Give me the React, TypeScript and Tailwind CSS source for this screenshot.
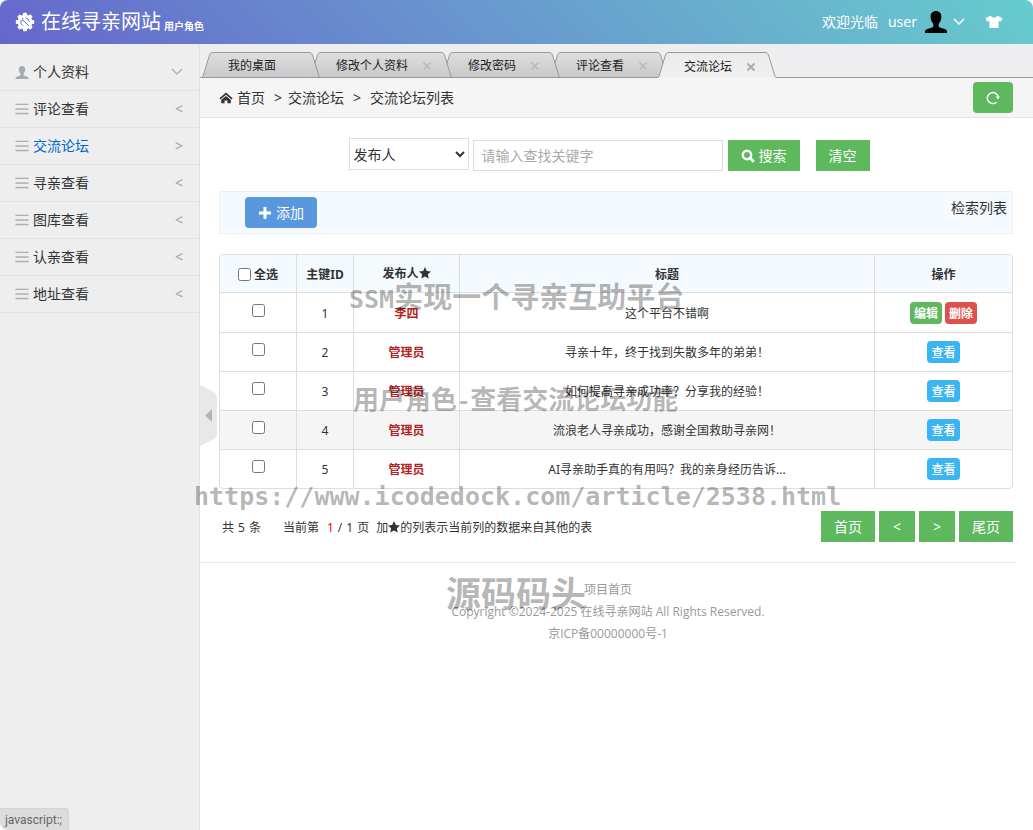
import { useState } from 'react';

type Tab = { title: string; closable: boolean };
type Topic = { id: number; author: string; title: string; own?: boolean };

const menus = ['评论查看', '交流论坛', '寻亲查看', '图库查看', '认亲查看', '地址查看'];

const tabs: Tab[] = [
  { title: '我的桌面', closable: false },
  { title: '修改个人资料', closable: true },
  { title: '修改密码', closable: true },
  { title: '评论查看', closable: true },
  { title: '交流论坛', closable: true },
];

const topics: Topic[] = [
  { id: 1, author: '李四', title: '这个平台不错啊', own: true },
  { id: 2, author: '管理员', title: '寻亲十年，终于找到失散多年的弟弟！' },
  { id: 3, author: '管理员', title: '如何提高寻亲成功率？分享我的经验！' },
  { id: 4, author: '管理员', title: '流浪老人寻亲成功，感谢全国救助寻亲网！' },
  { id: 5, author: '管理员', title: 'AI寻亲助手真的有用吗？我的亲身经历告诉...' },
];

const zIndexes = ['z-[5]', 'z-[4]', 'z-[3]', 'z-[2]', 'z-[1]'];

const GearIcon = () => (
  <svg width="20" height="20" viewBox="0 0 20 20" className="shrink-0">
    <g fill="#fff">
      <circle cx="10" cy="10" r="7.4" />
      {[0, 45, 90, 135, 180, 225, 270, 315].map((a) => (
        <rect key={a} x="8" y="0.8" width="4" height="4" rx="1" transform={`rotate(${a} 10 10)`} />
      ))}
    </g>
    <path
      d="M6 8.200A4.400 4.400 0 0 0 7.400 13.400M7.800 6.400v2.200l2 1.200 4 4M11 5.800A4.400 4.400 0 0 1 14.200 9.400"
      fill="none"
      stroke="#6a6fcb"
      strokeWidth="1"
      strokeLinecap="round"
    />
  </svg>
);

const PersonIcon = ({ className }: { className: string }) => (
  <svg viewBox="0 0 22 22" className={className} fill="currentColor">
    <path d="M11 0C7.7 0 5.6 2.2 5.6 5.6c0 2.6.9 5.4 2.7 7.1v2.4c0 .8-.4 1.2-1.2 1.5l-4.8 1.5C.8 18.600 0 19.500 0 21v.4c0 .4.3.6.7.6h20.600c.4 0 .7-.2.7-.6V21c0-1.500-.8-2.400-2.300-2.900l-4.800-1.500c-.8-.3-1.200-.7-1.200-1.500v-2.400c1.800-1.700 2.700-4.500 2.700-7.100C16.400 2.200 14.300 0 11 0z" />
  </svg>
);

const ChevronDown = ({ className }: { className: string }) => (
  <svg viewBox="0 0 12 8" className={className} fill="none" stroke="currentColor" strokeWidth="1.5">
    <path d="M1 1l5 5 5-5" />
  </svg>
);

const ShirtIcon = () => (
  <svg width="18" height="14" viewBox="0 0 18 14" fill="#fff">
    <path d="M5.600.8C6.400 2 7.600 2.600 9 2.600S11.600 2 12.400.8L17.400 3 16.200 6.600 13.600 6v7H4.400V6l-2.600.6L.6 3z" />
  </svg>
);

const ListIcon = () => (
  <svg width="14" height="12" viewBox="0 0 14 12" className="shrink-0" fill="#a9b0b6">
    <rect x="0.5" y="0.7" width="13" height="1.300" />
    <rect x="0.5" y="5.300" width="13" height="1.500" />
    <rect x="0.5" y="9.800" width="13" height="1.500" />
  </svg>
);

const HomeIcon = () => (
  <svg width="14" height="12" viewBox="0 0 14 12" fill="#333">
    <path d="M7 .4 13.600 6.200l-1.100 1.200L7 2.800 1.500 7.400.4 6.200z" />
    <path d="M7 4 11.800 8v3.200H8.400V8.400H5.600v2.800H2.200V8z" />
  </svg>
);

const StarIcon = () => (
  <svg width="12" height="12" viewBox="0 0 12 12" className="inline-block align-[-1px]" fill="currentColor">
    <path d="M6 0l1.800 3.900 4.200.5-3.100 2.900.8 4.300L6 9.500l-3.700 2.100.8-4.300L0 4.400l4.200-.5z" />
  </svg>
);

// sloped tab: left edge + body + right edge, neighbours overlap by one edge
const TabItem = ({ tab, active, z, onClick }: { tab: Tab; active: boolean; z: string; onClick: () => void }) => {
  const gradient = active ? 'from-[#eaebeb] to-[#f0f0f0]' : 'from-[#dddedd] to-[#c9c9cb]';
  const id = active ? 'tabOn' : 'tabOff';
  return (
    <li className={`relative flex h-[26px] -mr-3 ${active ? 'z-10' : z}`}>
      <svg width="12" height="26" viewBox="0 0 12 26" className="shrink-0">
        <defs>
          <linearGradient id={id} x1="0" y1="0" x2="0" y2="1">
            <stop offset="0" stopColor={active ? '#eaebeb' : '#dddedd'} />
            <stop offset="1" stopColor={active ? '#f0f0f0' : '#c9c9cb'} />
          </linearGradient>
        </defs>
        <path d="M0 26C1.500 25.500 2 24.500 2.400 23L8.500 3C9.200 1.200 10.200.5 12 .5V26z" fill={`url(#${id})`} />
        <path d="M0 25.500C1.500 25.500 2 24.500 2.400 23L8.500 3C9.200 1.200 10.200.5 12 .5" fill="none" stroke="#999" />
        {!active && <path d="M0 25.500H12" stroke="#999" />}
      </svg>
      <div className={`flex items-center border-t border-[#999] bg-gradient-to-b pt-0.5 pl-[15px] pr-[9px] ${gradient} ${active ? '' : 'border-b'}`}>
        <button type="button" onClick={onClick} className="text-xs whitespace-nowrap text-[#222]">
          {tab.title}
        </button>
        {tab.closable ? (
          <button type="button" aria-label="关闭" className="ml-[14px] w-[10px]">
            <svg width="10" height="10" viewBox="0 0 10 10" stroke={active ? '#a9adb1' : '#b4b8bc'} strokeWidth={active ? 2 : 1.500}>
              <path d="M1.500 1.500l7 7M8.500 1.500l-7 7" />
            </svg>
          </button>
        ) : (
          <span className="w-6" />
        )}
      </div>
      <svg width="12" height="26" viewBox="0 0 12 26" className="shrink-0">
        <path d="M12 26C10.500 25.500 10 24.500 9.600 23L3.500 3C2.800 1.200 1.800.5 0 .5V26z" fill={`url(#${id})`} />
        <path d="M12 25.500C10.500 25.500 10 24.500 9.600 23L3.500 3C2.800 1.200 1.800.5 0 .5" fill="none" stroke="#999" />
        {!active && <path d="M0 25.500H12" stroke="#999" />}
      </svg>
    </li>
  );
};

const Header = () => (
  <header className="flex h-11 items-center bg-linear-45 from-[#6666cc] to-[#66cccc] pl-[15px] pr-[30px] text-white">
    <GearIcon />
    <h1 className="ml-[6px] text-xl font-normal">在线寻亲网站</h1>
    <span className="ml-[3px] mt-2 text-[10px] font-bold">用户角色</span>
    <div className="ml-auto flex items-center text-sm">
      <span>欢迎光临</span>
      <span className="ml-[10px]">user</span>
      <PersonIcon className="ml-2 h-[22px] w-[22px] text-black" />
      <ChevronDown className="ml-[6px] h-2 w-3" />
      <button type="button" aria-label="换肤" className="ml-5">
        <ShirtIcon />
      </button>
    </div>
  </header>
);

const Sidebar = () => (
  <aside className="w-[200px] shrink-0 border-r border-[#e2e2e2] bg-[#eee] pt-[10px]">
    <ul>
      <li>
        <a href="#profile" className="flex h-[37px] items-center border-b border-[#e2e2e2] pl-[15px] pr-4 text-sm text-[#333]">
          <PersonIcon className="h-[13px] w-[14px] text-[#a3abb2]" />
          <span className="ml-1">个人资料</span>
          <ChevronDown className="ml-auto h-2 w-3 text-[#b3b3b3]" />
        </a>
      </li>
      {menus.map((name) => {
        const active = name === '交流论坛';
        return (
          <li key={name}>
            <a
              href="#list"
              className={`flex h-[37px] items-center border-b border-[#e2e2e2] pl-[15px] pr-4 text-sm ${active ? 'text-[#0066cc]' : 'text-[#333]'}`}
            >
              <ListIcon />
              <span className="ml-1">{name}</span>
              <span className="ml-auto font-medium text-[#aaa]">{active ? '>' : '<'}</span>
            </a>
          </li>
        );
      })}
    </ul>
  </aside>
);

const TopicTable = () => (
  <div className="mt-5 overflow-hidden rounded border border-[#ddd]">
    <table className="w-full table-fixed border-separate border-spacing-0 text-center text-xs text-[#333]">
      <thead>
        <tr className="h-[37px] bg-[#f5fafe]">
          <th className="w-[76px] pt-0.5">
            <label className="flex items-center justify-center gap-[3px]">
              <input type="checkbox" className="size-[13px]" />
              全选
            </label>
          </th>
          <th className="w-[57px] border-l border-[#ddd] pt-0.5">主键ID</th>
          <th className="w-[106px] border-l border-[#ddd]">
            发布人
            <StarIcon />
          </th>
          <th className="border-l border-[#ddd] pt-0.5">标题</th>
          <th className="w-[138px] border-l border-[#ddd] pt-0.5">操作</th>
        </tr>
      </thead>
      <tbody>
        {topics.map((t) => (
          <tr key={t.id} className={`${t.own ? 'h-10' : 'h-[39px]'} ${t.id === 4 ? 'bg-[#f5f5f5]' : ''}`}>
            <td className={`border-t border-[#ddd] ${t.own ? 'pb-1' : 'pb-1.5'}`}>
              <input type="checkbox" aria-label={`选择 ${t.id}`} className="mx-auto block size-[13px]" />
            </td>
            <td className="border-t border-l border-[#ddd] pt-0.5">{t.id}</td>
            <td className="border-t border-l border-[#ddd] pt-0.5 font-bold text-[#b22222]">{t.author}</td>
            <td className="truncate border-t border-l border-[#ddd] pt-0.5">{t.title}</td>
            <td className="border-t border-l border-[#ddd]">
              <div className="flex justify-center gap-[3px] text-white">
                {t.own ? (
                  <>
                    <button type="button" className="h-[22px] rounded bg-[#5eb95e] px-1 pt-0.5 font-bold">编辑</button>
                    <button type="button" className="h-[22px] rounded bg-[#dd514c] px-1 pt-0.5 font-bold">删除</button>
                  </>
                ) : (
                  <button type="button" className="h-[22px] rounded bg-[#3bb4f2] px-1 pt-0.5 font-medium">查看</button>
                )}
              </div>
            </td>
          </tr>
        ))}
      </tbody>
    </table>
  </div>
);

const Watermark = () => (
  <div className="pointer-events-none absolute inset-0 z-20 font-['DejaVu_Sans_Mono','Noto_Sans_CJK_SC',monospace] leading-none font-bold whitespace-nowrap text-black/30">
    <p className="absolute top-[240px] left-[149px] text-[29px]">
      <span className="text-[25px]">SSM</span>实现一个寻亲互助平台
    </p>
    <p className="absolute top-[343px] left-[153px] text-[26px]">
      用户角色<span className="text-[22px]">-</span>查看交流论坛功能
    </p>
    <p className="absolute top-[440px] left-[-6px] text-[25px]">https://www.icodedock.com/article/2538.html</p>
    <p className="absolute top-[534px] left-[246px] text-[35px]">源码码头</p>
  </div>
);

const App = () => {
  const [current, setCurrent] = useState(4);

  return (
    <div className="relative flex min-h-screen flex-col overflow-hidden rounded-lg bg-white font-['Noto_Sans','Noto_Sans_CJK_SC',sans-serif] text-[#333]">
      <Header />
      <div className="flex flex-1">
        <Sidebar />
        <main className="relative min-w-0 flex-1">
          <nav className="bg-[#eeeef0] pt-2">
            <ul className="flex h-[26px] border-b border-[#999] pl-px">
              {tabs.map((tab, i) => (
                <TabItem key={tab.title} tab={tab} active={i === current} z={zIndexes[i]} onClick={() => setCurrent(i)} />
              ))}
            </ul>
          </nav>

          <div className="flex h-10 items-center border-b border-[#e5e5e5] bg-[#f5f5f5] pl-[19px] pr-5 text-sm">
            <HomeIcon />
            <a href="#home" className="ml-1">首页</a>
            <span className="ml-[9px]">&gt;</span>
            <a href="#forum" className="ml-[6px]">交流论坛</a>
            <span className="ml-[9px]">&gt;</span>
            <span className="ml-[9px]">交流论坛列表</span>
            <button type="button" aria-label="刷新" className="ml-auto flex h-[31px] w-10 items-center justify-center rounded bg-[#5eb95e]">
              <svg width="14" height="14" viewBox="0 0 14 14" fill="none" stroke="#fff" strokeWidth="1.500">
                <path d="M10.500 11.200A5.500 5.500 0 1 1 12.300 6.400" />
                <path d="M9.600 5.600h4.200l-1.800 2.800z" fill="#fff" stroke="none" />
              </svg>
            </button>
          </div>

          <div className="pt-5 pl-[19px] pr-5">
            <form className="flex min-h-[33px] items-end justify-center pr-[14px] text-sm">
              <select aria-label="查找字段" className="h-8 w-[120px] self-start border border-[#ddd] bg-white">
                <option>发布人</option>
              </select>
              <input
                type="text"
                aria-label="关键字"
                placeholder="请输入查找关键字"
                className="ml-1 h-[31px] w-[250px] border border-[#ddd] px-2 placeholder:text-[#aaa]"
              />
              <button type="button" className="ml-[5px] flex h-[31px] w-[72px] items-center justify-center gap-1 bg-[#5eb95e] text-white">
                <svg width="14" height="14" viewBox="0 0 14 14" fill="none" stroke="#fff">
                  <circle cx="6" cy="6" r="4.200" strokeWidth="2.400" />
                  <path d="M9 9l3.800 3.800" strokeWidth="3" />
                </svg>
                搜索
              </button>
              <button type="reset" className="ml-4 h-[31px] w-[54px] bg-[#5eb95e] text-white">清空</button>
            </form>

            <div className="mt-5 flex h-[43px] justify-between border border-[#ebeff2] bg-[#f5fafe] pt-[5px] pr-[5px] pl-[25px] text-sm">
              <button type="button" className="flex h-[31px] w-[72px] items-center justify-center gap-1 rounded bg-[#5a98de] text-white">
                <svg width="14" height="14" viewBox="0 0 14 14" stroke="#fff" strokeWidth="3">
                  <path d="M1 7h12M7 1v12" />
                </svg>
                添加
              </button>
              <span className="leading-[22px]">检索列表</span>
            </div>

            <TopicTable />

            <div className="mt-[22px] flex items-center text-xs">
              <p className="ml-[3px] flex gap-1 pt-0.5">
                <span>共</span>
                <span>5</span>
                <span>条</span>
              </p>
              <p className="ml-[22px] flex gap-1 pt-0.5">
                <span>当前第</span>
                <span className="ml-1 text-[#f00]">1</span>
                <span>/</span>
                <span>1</span>
                <span>页</span>
                <span className="ml-[3px]">
                  加<StarIcon />的列表示当前列的数据来自其他的表
                </span>
              </p>
              <div className="ml-auto flex gap-1 text-sm text-white">
                <button type="button" className="h-[31px] w-[54px] bg-[#5eb95e]">首页</button>
                <button type="button" className="h-[31px] w-9 bg-[#5eb95e]">&lt;</button>
                <button type="button" className="h-[31px] w-9 bg-[#5eb95e]">&gt;</button>
                <button type="button" className="h-[31px] w-[54px] bg-[#5eb95e]">尾页</button>
              </div>
            </div>
          </div>

          <footer className="mt-5 mr-[17px] border-t border-[#e5e5e5] pt-4 text-center font-['Open_Sans','Noto_Sans_CJK_SC',sans-serif] text-xs leading-[22px] text-[#999]">
            <p>项目首页</p>
            <p>Copyright ©2024-2025 在线寻亲网站 All Rights Reserved.</p>
            <p>京ICP备00000000号-1</p>
          </footer>

          <button type="button" aria-label="收起菜单" className="absolute top-[341px] left-0">
            <svg width="17" height="61" viewBox="0 0 17 61">
              <path d="M0 0l14 7q3 2 3 5v37q0 3-3 5L0 61z" fill="#e8e8e8" />
              <path d="M12 24v13l-7-6.500z" fill="#b3b3b3" />
            </svg>
          </button>
          <Watermark />
        </main>
      </div>
      <div className="absolute bottom-0 left-0 h-[22px] rounded-tr border-t border-r border-[#d5d5d5] bg-[#dcdcdc] pr-[6px] pl-[5px] font-['Roboto',sans-serif] text-xs leading-[22px] text-[#666]">
        javascript:;
      </div>
    </div>
  );
};

export default App;
